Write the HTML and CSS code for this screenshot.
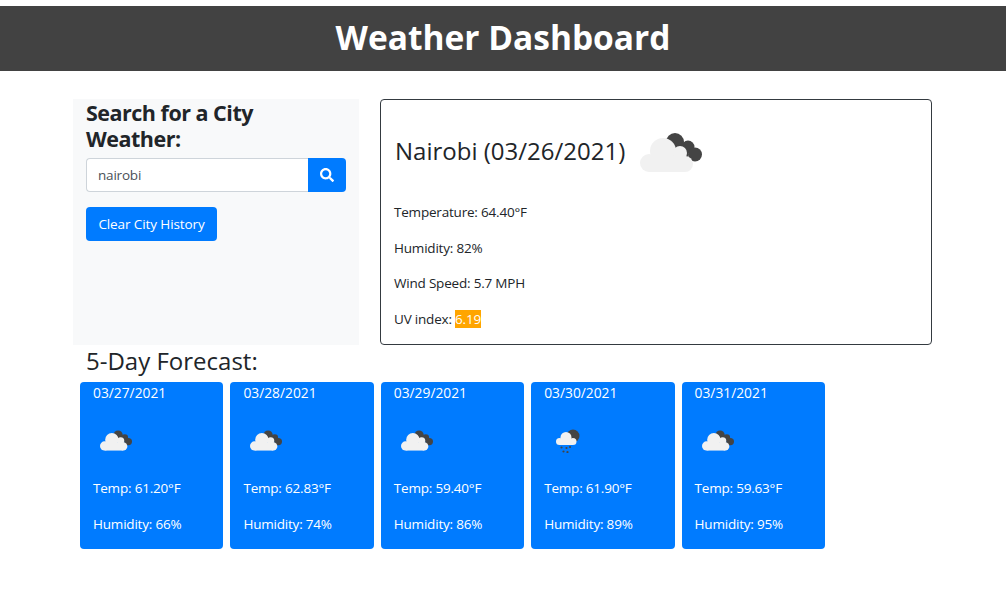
FILE: index.html
```html
<!DOCTYPE html>
<html lang="en">
<head>
  <meta charset="UTF-8">
  <meta name="viewport" content="width=device-width, initial-scale=1.0">
  <title>Weather Dashboard</title>
  <link rel="stylesheet" href="styles.css">
</head>
<body>

<svg class="sprites" width="0" height="0" aria-hidden="true">
  <symbol id="cloud-dark" viewBox="0 0 62 39">
    <g fill="#444">
      <circle cx="35" cy="9" r="9"/>
      <circle cx="48" cy="14" r="6.500"/>
      <circle cx="55" cy="21.500" r="7"/>
      <path d="M30 10h18v16h7l-8 3z"/>
    </g>
    <g fill="#f1f1f1">
      <circle cx="23" cy="18" r="13"/>
      <circle cx="9" cy="30" r="9"/>
      <circle cx="40" cy="20" r="7"/>
      <circle cx="45" cy="31" r="8"/>
      <path d="M9 24h36v15H9z"/>
    </g>
  </symbol>
  <symbol id="cloud-rain" viewBox="0 0 24 24">
    <circle cx="17" cy="7" r="6.500" fill="#444"/>
    <g fill="#f1f1f1">
      <circle cx="10" cy="8.500" r="5.500"/>
      <circle cx="3.500" cy="12.500" r="3.500"/>
      <circle cx="17" cy="12.500" r="3.500"/>
      <path d="M3.500 10h13.500v6H3.500z"/>
    </g>
    <g fill="#444">
      <circle cx="5.500" cy="18.500" r="1.100"/><circle cx="10.500" cy="19" r="1.100"/><circle cx="14" cy="18" r="1.100"/>
      <circle cx="7.500" cy="22.500" r="1.100"/><circle cx="11.500" cy="23" r="1.100"/>
    </g>
  </symbol>
</svg>

<header>
  <h1>Weather Dashboard</h1>
</header>

<main>
  <div class="top-row">
    <aside class="search-box">
      <h2>Search for a City Weather:</h2>
      <form class="search-form">
        <input type="text" value="nairobi">
        <button type="button" class="search-btn" aria-label="Search">
          <svg width="14" height="14" viewBox="0 0 512 512"><path fill="#fff" d="M505 442.700 405.300 343c-4.500-4.500-10.600-7-17-7H372c27.600-35.300 44-79.700 44-128C416 93.100 322.900 0 208 0S0 93.100 0 208s93.100 208 208 208c48.300 0 92.700-16.400 128-44v16.300c0 6.400 2.500 12.500 7 17l99.700 99.700c9.400 9.400 24.600 9.400 33.900 0l28.300-28.300c9.400-9.400 9.400-24.600.1-34zM208 336c-70.700 0-128-57.200-128-128 0-70.700 57.200-128 128-128 70.700 0 128 57.200 128 128 0 70.700-57.200 128-128 128z"/></svg>
        </button>
      </form>
      <button type="button" class="clear-btn">Clear City History</button>
    </aside>

    <section class="current">
      <div class="current-title">
        <h3>Nairobi (03/26/2021)</h3>
        <svg class="current-icon"><use href="#cloud-dark"/></svg>
      </div>
      <p>Temperature: 64.40°F</p>
      <p>Humidity: 82%</p>
      <p>Wind Speed: 5.7 MPH</p>
      <p>UV index: <span class="uv">6.19</span></p>
    </section>
  </div>

  <h3 class="forecast-title">5-Day Forecast:</h3>
  <div class="forecast">
    <div class="day">
      <div class="date">03/27/2021</div>
      <svg class="day-icon"><use href="#cloud-dark"/></svg>
      <p>Temp: 61.20°F</p>
      <p>Humidity: 66%</p>
    </div>
    <div class="day">
      <div class="date">03/28/2021</div>
      <svg class="day-icon"><use href="#cloud-dark"/></svg>
      <p>Temp: 62.83°F</p>
      <p>Humidity: 74%</p>
    </div>
    <div class="day">
      <div class="date">03/29/2021</div>
      <svg class="day-icon"><use href="#cloud-dark"/></svg>
      <p>Temp: 59.40°F</p>
      <p>Humidity: 86%</p>
    </div>
    <div class="day">
      <div class="date">03/30/2021</div>
      <svg class="day-icon rain"><use href="#cloud-rain"/></svg>
      <p>Temp: 61.90°F</p>
      <p>Humidity: 89%</p>
    </div>
    <div class="day">
      <div class="date">03/31/2021</div>
      <svg class="day-icon"><use href="#cloud-dark"/></svg>
      <p>Temp: 59.63°F</p>
      <p>Humidity: 95%</p>
    </div>
  </div>
</main>

</body>
</html>
```

FILE: styles.css
```css
* {
  box-sizing: border-box;
}
body {
  font-family: "Open Sans", "Noto Sans", sans-serif;
  font-size: 13.500px;
  line-height: 21px;
  letter-spacing: -0.2px;
  color: #212529;
  margin: 0;
  padding: 6px 0 0;
  background-color: #fff;
}
.sprites {
  position: absolute;
}
header {
  background-color: #424242;
  color: #fff;
  height: 65px;
  display: flex;
  align-items: center;
  justify-content: center;
  padding-bottom: 2px;
}
h1 {
  margin: 0;
  font-size: 33.500px;
  font-weight: 700;
  line-height: 1.2;
  letter-spacing: 0;
}
main {
  padding: 28px 74px 0 73px;
}
.top-row {
  display: flex;
  gap: 21px;
  height: 246px;
}
.search-box {
  width: 286px;
  background-color: #f8f9fa;
  padding: 1px 13px 0;
}
h2 {
  margin: 0 0 6px;
  font-size: 21.500px;
  font-weight: 700;
  line-height: 26px;
  letter-spacing: -0.5px;
}
.search-form {
  display: flex;
  height: 34px;
  margin-bottom: 15px;
}
.search-form input {
  flex: 1;
  min-width: 0;
  border: 1px solid #ced4da;
  border-right: 0;
  border-radius: 4px 0 0 4px;
  padding: 1px 12px 0 11px;
  font: inherit;
  letter-spacing: inherit;
  color: #495057;
}
.search-btn {
  width: 38px;
  border: 0;
  border-radius: 0 4px 4px 0;
  background-color: #007bff;
  display: flex;
  align-items: center;
  justify-content: center;
}
.clear-btn {
  height: 34px;
  width: 131px;
  padding: 0;
  border: 0;
  border-radius: 4px;
  background-color: #007bff;
  color: #fff;
  font: inherit;
  letter-spacing: -0.1px;
}
.current {
  width: 552px;
  border: 1px solid #343a40;
  border-radius: 4px;
  padding: 0 13px;
}
.current-title {
  display: flex;
  align-items: center;
  gap: 15px;
  height: 91px;
  padding: 9px 0 0 1px;
  margin-bottom: 11px;
}
h3 {
  margin: 0;
  font-size: 24px;
  font-weight: 400;
  line-height: 29px;
  letter-spacing: 0;
}
.current-icon {
  width: 62px;
  height: 39px;
  margin-top: 4px;
}
.current p {
  margin: 0 0 14.500px;
}
.uv {
  background-color: orange;
  color: #fff;
}
.forecast-title {
  margin: 1px 0 0 13px;
  height: 36px;
}
.forecast {
  display: flex;
  gap: 7px;
  margin-left: 7px;
}
.day {
  width: 143.400px;
  height: 167px;
  padding: 0 13px;
  border-radius: 4px;
  background-color: #007bff;
  color: #fff;
}
.date {
  height: 21px;
  letter-spacing: 0;
  font-size: 13.800px;
}
.day-icon {
  display: block;
  width: 32px;
  height: 21px;
  margin: 27px 0 27px 7px;
}
.day-icon.rain {
  width: 24px;
  height: 24px;
  margin: 26px 0 25px 12px;
}
.day p {
  margin: 0 0 15px;
}
```
